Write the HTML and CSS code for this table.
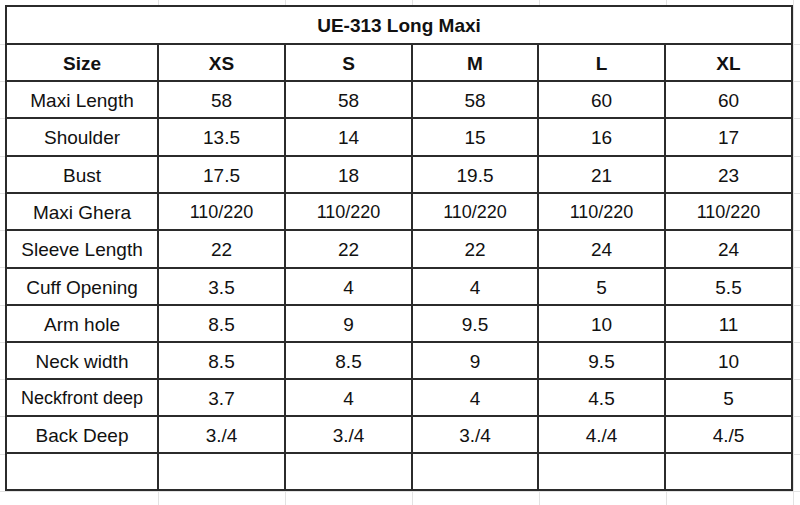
FILE: index.html
```html
<!DOCTYPE html>
<html lang="en">
<head>
<meta charset="utf-8">
<title>UE-313 Long Maxi</title>
<link rel="stylesheet" href="styles.css">
</head>
<body>
<div class="sheet">
  <div class="size-table">
    <div class="cell title">UE-313 Long Maxi</div>

    <div class="cell head">Size</div>
    <div class="cell head">XS</div>
    <div class="cell head">S</div>
    <div class="cell head">M</div>
    <div class="cell head">L</div>
    <div class="cell head">XL</div>

    <div class="cell label">Maxi Length</div>
    <div class="cell">58</div><div class="cell">58</div><div class="cell">58</div><div class="cell">60</div><div class="cell">60</div>

    <div class="cell label">Shoulder</div>
    <div class="cell">13.5</div><div class="cell">14</div><div class="cell">15</div><div class="cell">16</div><div class="cell">17</div>

    <div class="cell label">Bust</div>
    <div class="cell">17.5</div><div class="cell">18</div><div class="cell">19.5</div><div class="cell">21</div><div class="cell">23</div>

    <div class="cell label">Maxi Ghera</div>
    <div class="cell small">110/220</div><div class="cell small">110/220</div><div class="cell small">110/220</div><div class="cell small">110/220</div><div class="cell small">110/220</div>

    <div class="cell label">Sleeve Length</div>
    <div class="cell">22</div><div class="cell">22</div><div class="cell">22</div><div class="cell">24</div><div class="cell">24</div>

    <div class="cell label">Cuff Opening</div>
    <div class="cell">3.5</div><div class="cell">4</div><div class="cell">4</div><div class="cell">5</div><div class="cell">5.5</div>

    <div class="cell label">Arm hole</div>
    <div class="cell">8.5</div><div class="cell">9</div><div class="cell">9.5</div><div class="cell">10</div><div class="cell">11</div>

    <div class="cell label">Neck width</div>
    <div class="cell">8.5</div><div class="cell">8.5</div><div class="cell">9</div><div class="cell">9.5</div><div class="cell">10</div>

    <div class="cell label tiny">Neckfront deep</div>
    <div class="cell">3.7</div><div class="cell">4</div><div class="cell">4</div><div class="cell">4.5</div><div class="cell">5</div>

    <div class="cell label">Back Deep</div>
    <div class="cell">3./4</div><div class="cell">3./4</div><div class="cell">3./4</div><div class="cell">4./4</div><div class="cell">4./5</div>

    <div class="cell"></div><div class="cell"></div><div class="cell"></div><div class="cell"></div><div class="cell"></div><div class="cell"></div>
  </div>
</div>
</body>
</html>
```

FILE: styles.css
```css
html, body {
  margin: 0;
  padding: 0;
  background: #ffffff;
}

body {
  font-family: "Liberation Sans", Arial, Helvetica, sans-serif;
  color: #111111;
  width: 800px;
  height: 505px;
  overflow: hidden;
}

.sheet {
  box-sizing: border-box;
  width: 800px;
  height: 505px;
  padding: 5px 0 0 5px;
  background:
    repeating-linear-gradient(to right, #e2e2e2 0 1px, transparent 1px 127px) 158px 0 / 643px 100% no-repeat,
    repeating-linear-gradient(to bottom, #e2e2e2 0 1px, transparent 1px 37.23px) 0 44px / 100% 470px no-repeat,
    #ffffff;
}

.size-table {
  display: grid;
  width: 788px;
  box-sizing: border-box;
  grid-template-columns: 152px 127px 127px 126px 127px 127px;
  grid-template-rows: 38px 37px 37px 38px 37px 37px 38px 37px 37px 37px 37px 37px 37px;
  border-left: 2px solid #2b2b2b;
  border-top: 2px solid #2b2b2b;
  background: #ffffff;
}

.cell {
  box-sizing: border-box;
  display: flex;
  align-items: center;
  justify-content: center;
  padding-top: 2px;
  border-right: 2px solid #2b2b2b;
  border-bottom: 2px solid #2b2b2b;
  font-size: 19px;
  white-space: nowrap;
  background: #ffffff;
}

.title {
  grid-column: 1 / -1;
  font-weight: bold;
  font-size: 19px;
}

.head {
  font-weight: bold;
  font-size: 19px;
}

.label {
  font-size: 19px;
}

.label.tiny {
  font-size: 18px;
}

.cell.small {
  font-size: 18px;
}
```
